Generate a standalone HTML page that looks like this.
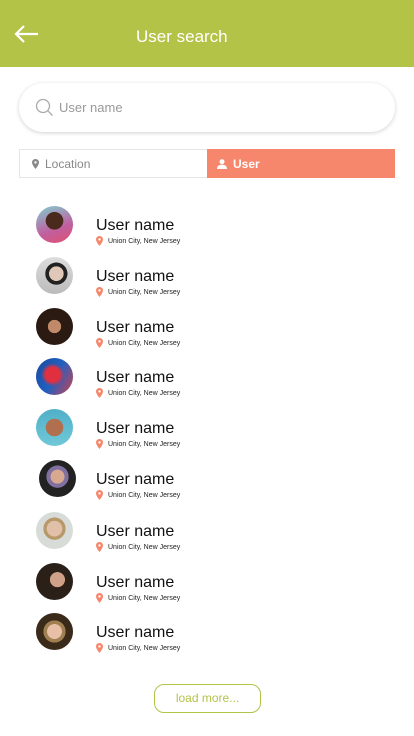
<!DOCTYPE html>
<html><head><meta charset="utf-8"><style>
*{margin:0;padding:0;box-sizing:border-box}
body{width:414px;height:736px;background:#fff;font-family:"Liberation Sans",sans-serif;position:relative;overflow:hidden}
.hdr{position:absolute;left:0;top:0;width:414px;height:67px;background:#b3c348}
.hdr .t{position:absolute;left:136px;top:27px;color:#fff;font-size:17px}
.search{position:absolute;left:19px;top:83px;width:376px;height:49px;border-radius:25px;background:#fff;box-shadow:0 1px 4px rgba(0,0,0,.18)}
.search span{position:absolute;left:40px;top:17px;font-size:13px;color:#999}
.tabs{position:absolute;left:19px;top:149px;width:376px;height:29px;display:flex}
.tab1{width:188px;border:1px solid #e6e6e6;border-right:none;color:#888;font-size:12px;display:flex;align-items:center;padding-left:12px}
.tab2{width:188px;background:#f6866c;color:#fff;font-size:12px;font-weight:bold;display:flex;align-items:center;padding-left:10px}
.row{position:absolute;left:0;width:414px;height:40px}
.av{position:absolute;left:36px;top:0;width:37px;height:37px;border-radius:50%}
.nm{position:absolute;left:96px;top:11px;font-size:16px;color:#111}
.lc{position:absolute;left:96px;top:30px;font-size:7px;color:#222;display:flex;align-items:center}
.lc svg{margin-right:5px}
.btn{position:absolute;left:154px;top:684px;width:107px;height:29px;border:1.5px solid #b3c348;border-radius:10px;color:#b3c348;font-size:12px;text-align:center;line-height:26px}
</style></head><body>
<div class="hdr">
<svg style="position:absolute;left:14px;top:25px" width="25" height="18" viewBox="0 0 25 18"><path d="M24 9H2M10 1L2 9l8 8" stroke="#fff" stroke-width="2.2" fill="none"/></svg>
<div class="t">User search</div></div>
<div class="search">
<svg style="position:absolute;left:16px;top:15px" width="19" height="19" viewBox="0 0 19 19"><circle cx="8" cy="8" r="6.5" stroke="#aaa" stroke-width="1.3" fill="none"/><path d="M12.7 12.7L17.5 17.5" stroke="#aaa" stroke-width="1.3"/></svg>
<span>User name</span></div>
<div class="tabs">
<div class="tab1"><svg width="7" height="10" viewBox="0 0 7 10" style="margin-right:6px"><path d="M3.5 0C1.5 0 0 1.5 0 3.4 0 6 3.5 10 3.5 10S7 6 7 3.4C7 1.5 5.5 0 3.5 0z" fill="#888"/><circle cx="3.5" cy="3.4" r="1.2" fill="#fff"/></svg>Location</div>
<div class="tab2"><svg width="10" height="10" viewBox="0 0 10 10" style="margin-right:6px"><circle cx="5" cy="2.7" r="2.5" fill="#fff"/><path d="M0 10C0 7 2 5.8 5 5.8S10 7 10 10z" fill="#fff"/></svg>User</div>
</div>

<div class="row" style="top:206px"><div class="av" style="background:radial-gradient(circle at 50% 40%,#4a2a1c 0 30%,transparent 31%),linear-gradient(160deg,#7fd0d0,#c060a0 60%,#e05070)"></div><div class="nm">User name</div><div class="lc"><svg width="7" height="10" viewBox="0 0 7 10"><path d="M3.5 0C1.5 0 0 1.5 0 3.4 0 6 3.5 10 3.5 10S7 6 7 3.4C7 1.5 5.5 0 3.5 0z" fill="#f6866c"/><circle cx="3.5" cy="3.4" r="1.2" fill="#fff"/></svg>Union City, New Jersey</div></div>
<div class="row" style="top:257px"><div class="av" style="background:radial-gradient(circle at 55% 45%,#e0c8b8 0 25%,#222 26% 38%,transparent 39%),linear-gradient(#ddd,#bbb)"></div><div class="nm">User name</div><div class="lc"><svg width="7" height="10" viewBox="0 0 7 10"><path d="M3.5 0C1.5 0 0 1.5 0 3.4 0 6 3.5 10 3.5 10S7 6 7 3.4C7 1.5 5.5 0 3.5 0z" fill="#f6866c"/><circle cx="3.5" cy="3.4" r="1.2" fill="#fff"/></svg>Union City, New Jersey</div></div>
<div class="row" style="top:308px"><div class="av" style="background:radial-gradient(circle at 50% 50%,#c08a6a 0 25%,#2a1a12 26%)"></div><div class="nm">User name</div><div class="lc"><svg width="7" height="10" viewBox="0 0 7 10"><path d="M3.5 0C1.5 0 0 1.5 0 3.4 0 6 3.5 10 3.5 10S7 6 7 3.4C7 1.5 5.5 0 3.5 0z" fill="#f6866c"/><circle cx="3.5" cy="3.4" r="1.2" fill="#fff"/></svg>Union City, New Jersey</div></div>
<div class="row" style="top:358px"><div class="av" style="background:radial-gradient(circle at 45% 45%,#e03040 0 25%,transparent 40%),linear-gradient(120deg,#1a4aa0,#2060c0 50%,#d04050)"></div><div class="nm">User name</div><div class="lc"><svg width="7" height="10" viewBox="0 0 7 10"><path d="M3.5 0C1.5 0 0 1.5 0 3.4 0 6 3.5 10 3.5 10S7 6 7 3.4C7 1.5 5.5 0 3.5 0z" fill="#f6866c"/><circle cx="3.5" cy="3.4" r="1.2" fill="#fff"/></svg>Union City, New Jersey</div></div>
<div class="row" style="top:409px"><div class="av" style="background:radial-gradient(circle at 50% 50%,#b07050 0 33%,transparent 34%),linear-gradient(#50b0c8,#70c8d8)"></div><div class="nm">User name</div><div class="lc"><svg width="7" height="10" viewBox="0 0 7 10"><path d="M3.5 0C1.5 0 0 1.5 0 3.4 0 6 3.5 10 3.5 10S7 6 7 3.4C7 1.5 5.5 0 3.5 0z" fill="#f6866c"/><circle cx="3.5" cy="3.4" r="1.2" fill="#fff"/></svg>Union City, New Jersey</div></div>
<div class="row" style="top:460px"><div class="av" style="left:39px;background:radial-gradient(circle at 50% 45%,#d8a890 0 25%,#8070a0 26% 40%,#222 41%)"></div><div class="nm">User name</div><div class="lc"><svg width="7" height="10" viewBox="0 0 7 10"><path d="M3.5 0C1.5 0 0 1.5 0 3.4 0 6 3.5 10 3.5 10S7 6 7 3.4C7 1.5 5.5 0 3.5 0z" fill="#f6866c"/><circle cx="3.5" cy="3.4" r="1.2" fill="#fff"/></svg>Union City, New Jersey</div></div>
<div class="row" style="top:512px"><div class="av" style="background:radial-gradient(circle at 50% 45%,#e0c0a8 0 28%,#b89868 29% 40%,#d8dcd8 41%)"></div><div class="nm">User name</div><div class="lc"><svg width="7" height="10" viewBox="0 0 7 10"><path d="M3.5 0C1.5 0 0 1.5 0 3.4 0 6 3.5 10 3.5 10S7 6 7 3.4C7 1.5 5.5 0 3.5 0z" fill="#f6866c"/><circle cx="3.5" cy="3.4" r="1.2" fill="#fff"/></svg>Union City, New Jersey</div></div>
<div class="row" style="top:563px"><div class="av" style="background:radial-gradient(circle at 58% 45%,#d0a088 0 25%,#2a2018 26%)"></div><div class="nm">User name</div><div class="lc"><svg width="7" height="10" viewBox="0 0 7 10"><path d="M3.5 0C1.5 0 0 1.5 0 3.4 0 6 3.5 10 3.5 10S7 6 7 3.4C7 1.5 5.5 0 3.5 0z" fill="#f6866c"/><circle cx="3.5" cy="3.4" r="1.2" fill="#fff"/></svg>Union City, New Jersey</div></div>
<div class="row" style="top:613px"><div class="av" style="background:radial-gradient(circle at 50% 50%,#e8c0a8 0 28%,#a08050 29% 42%,#3a2a1a 43%)"></div><div class="nm">User name</div><div class="lc"><svg width="7" height="10" viewBox="0 0 7 10"><path d="M3.5 0C1.5 0 0 1.5 0 3.4 0 6 3.5 10 3.5 10S7 6 7 3.4C7 1.5 5.5 0 3.5 0z" fill="#f6866c"/><circle cx="3.5" cy="3.4" r="1.2" fill="#fff"/></svg>Union City, New Jersey</div></div>

<div class="btn">load more...</div>
</body></html>
